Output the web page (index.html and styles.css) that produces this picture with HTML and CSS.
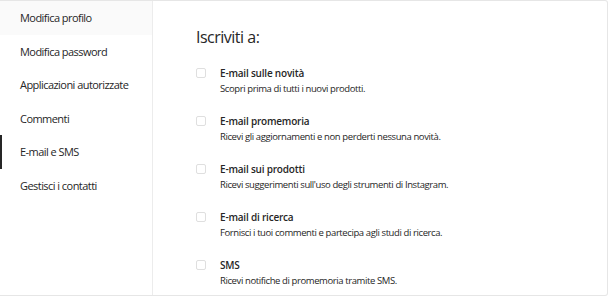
FILE: index.html
```html
<!DOCTYPE html>
<html lang="it">
<head>
    <meta charset="UTF-8">
    <meta name="viewport" content="width=device-width, initial-scale=1.0">
    <title>E-mail e SMS</title>
    <link rel="stylesheet" href="styles.css">
</head>
<body>
    <div class="settings">
        <!-- menu laterale -->
        <ul class="side-menu">
            <li class="menu-item first">Modifica profilo</li>
            <li class="menu-item">Modifica password</li>
            <li class="menu-item">Applicazioni autorizzate</li>
            <li class="menu-item">Commenti</li>
            <li class="menu-item active">E-mail e SMS</li>
            <li class="menu-item">Gestisci i contatti</li>
        </ul>

        <!-- contenuto -->
        <div class="content">
            <h2 class="content-title">Iscriviti a:</h2>

            <div class="option">
                <span class="check"></span>
                <div class="option-text">
                    <div class="option-title">E-mail sulle novità</div>
                    <div class="option-desc">Scopri prima di tutti i nuovi prodotti.</div>
                </div>
            </div>

            <div class="option">
                <span class="check"></span>
                <div class="option-text">
                    <div class="option-title">E-mail promemoria</div>
                    <div class="option-desc">Ricevi gli aggiornamenti e non perderti nessuna novità.</div>
                </div>
            </div>

            <div class="option">
                <span class="check"></span>
                <div class="option-text">
                    <div class="option-title">E-mail sui prodotti</div>
                    <div class="option-desc">Ricevi suggerimenti sull'uso degli strumenti di Instagram.</div>
                </div>
            </div>

            <div class="option">
                <span class="check"></span>
                <div class="option-text">
                    <div class="option-title">E-mail di ricerca</div>
                    <div class="option-desc">Fornisci i tuoi commenti e partecipa agli studi di ricerca.</div>
                </div>
            </div>

            <div class="option">
                <span class="check"></span>
                <div class="option-text">
                    <div class="option-title">SMS</div>
                    <div class="option-desc">Ricevi notifiche di promemoria tramite SMS.</div>
                </div>
            </div>
        </div>
    </div>
</body>
</html>
```

FILE: styles.css
```css
* {
    margin: 0;
    padding: 0;
    box-sizing: border-box;
}

body {
    font-family: 'Open Sans', 'Noto Sans', sans-serif;
    color: #262626;
    background: #fff;
}

/* contenitore principale */
.settings {
    display: flex;
    width: 608px;
    height: 296px;
    border: 1px solid #e6e6e6;
    border-left: none;
    border-radius: 0 3px 3px 0;
    overflow: hidden;
}

/* menu laterale */
.side-menu {
    list-style: none;
    width: 153px;
    flex-shrink: 0;
    border-right: 1px solid #ececec;
}

.menu-item {
    height: 33.5px;
    line-height: 33.5px;
    padding-left: 18px;
    font-size: 11px;
    letter-spacing: -0.55px;
    border-left: 2px solid transparent;
    white-space: nowrap;
}

.menu-item.first {
    background: #fafafa;
}

.menu-item.active {
    border-left-color: #262626;
}

/* contenuto */
.content {
    flex: 1;
    padding: 26px 0 0 43px;
}

.content-title {
    font-size: 16px;
    font-weight: 400;
    line-height: 20px;
    letter-spacing: -0.5px;
    margin-bottom: 20px;
}

.option {
    display: flex;
    gap: 14px;
    height: 48px;
}

.check {
    width: 10px;
    height: 10px;
    margin-top: 1px;
    border: 1px solid #dfdfdf;
    border-radius: 2px;
    flex-shrink: 0;
}

.option-title {
    font-size: 10px;
    font-weight: 600;
    line-height: 12px;
    margin-bottom: 4px;
    letter-spacing: -0.2px;
}

.option-desc {
    font-size: 9.5px;
    line-height: 12px;
    letter-spacing: -0.4px;
}
```
